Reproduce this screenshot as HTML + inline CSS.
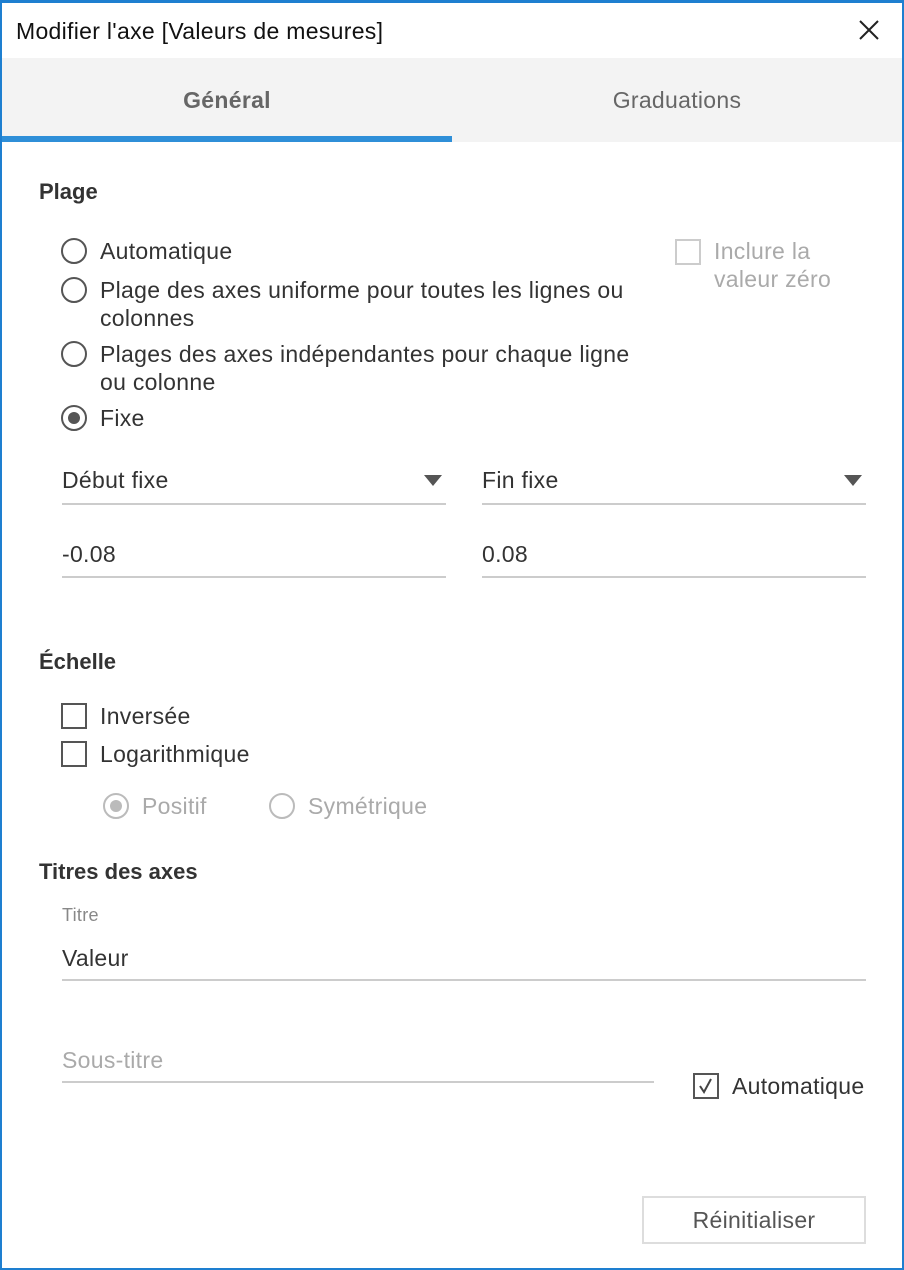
<!DOCTYPE html>
<html><head><meta charset="utf-8"><style>
*{margin:0;padding:0;box-sizing:border-box}
body{width:904px;height:1270px;background:#fff;font-family:"Liberation Sans",Arial,sans-serif;color:#333;position:relative;overflow:hidden}
.frame{position:absolute;left:0;top:0;width:904px;height:1270px;border:2px solid #1e7fd0;border-top-width:3px}
.t{position:absolute;white-space:nowrap;line-height:28px;font-size:23px;letter-spacing:0.3px}
.h{font-size:22px;font-weight:bold;letter-spacing:0}
.r{position:absolute;width:26px;height:26px;border:2px solid #555;border-radius:50%}
.r.d{border-color:#bbb}
.cb{position:absolute;width:26px;height:26px;border:2px solid #555}
.ln{position:absolute;height:2px;background:#ccc}
.tri{position:absolute;width:0;height:0;border-left:9px solid transparent;border-right:9px solid transparent;border-top:11px solid #555}
</style></head><body>
<div class="frame"></div>
<div class="t" style="left:16px;top:17px;color:#111">Modifier l'axe [Valeurs de mesures]</div>
<svg style="position:absolute;left:858px;top:19px" width="22" height="22"><path d="M2 2L20 20M20 2L2 20" stroke="#222" stroke-width="2"/></svg>
<div style="position:absolute;left:2px;top:58px;width:900px;height:84px;background:#f3f3f3"></div>
<div style="position:absolute;left:2px;top:136px;width:450px;height:6px;background:#2f8fd8"></div>
<div class="t" style="left:0;width:454px;text-align:center;top:86px;font-weight:bold;color:#666">Général</div>
<div class="t" style="left:452px;width:450px;text-align:center;top:86px;color:#666">Graduations</div>

<div class="t h" style="left:39px;top:178px">Plage</div>
<div class="r" style="left:61px;top:238px"></div><div class="t" style="left:100px;top:237px">Automatique</div>
<div class="r" style="left:61px;top:277px"></div><div class="t" style="left:100px;top:276px">Plage des axes uniforme pour toutes les lignes ou</div>
<div class="t" style="left:100px;top:304px">colonnes</div>
<div class="r" style="left:61px;top:341px"></div><div class="t" style="left:100px;top:340px">Plages des axes indépendantes pour chaque ligne</div>
<div class="t" style="left:100px;top:368px">ou colonne</div>
<div class="r" style="left:61px;top:405px"></div><div style="position:absolute;left:68px;top:412px;width:12px;height:12px;border-radius:50%;background:#555"></div>
<div class="t" style="left:100px;top:404px">Fixe</div>
<div class="cb" style="left:675px;top:239px;border-color:#ccc"></div>
<div class="t" style="left:714px;top:237px;color:#aaa">Inclure la</div>
<div class="t" style="left:714px;top:265px;color:#aaa">valeur zéro</div>

<div class="t" style="left:62px;top:466px">Début fixe</div><div class="tri" style="left:424px;top:475px"></div>
<div class="ln" style="left:62px;top:503px;width:384px"></div>
<div class="t" style="left:482px;top:466px">Fin fixe</div><div class="tri" style="left:844px;top:475px"></div>
<div class="ln" style="left:482px;top:503px;width:384px"></div>
<div class="t" style="left:62px;top:540px">-0.08</div>
<div class="ln" style="left:62px;top:576px;width:384px"></div>
<div class="t" style="left:482px;top:540px">0.08</div>
<div class="ln" style="left:482px;top:576px;width:384px"></div>

<div class="t h" style="left:39px;top:648px">Échelle</div>
<div class="cb" style="left:61px;top:703px"></div><div class="t" style="left:100px;top:702px">Inversée</div>
<div class="cb" style="left:61px;top:741px"></div><div class="t" style="left:100px;top:740px">Logarithmique</div>
<div class="r d" style="left:103px;top:793px"></div><div style="position:absolute;left:110px;top:800px;width:12px;height:12px;border-radius:50%;background:#bbb"></div>
<div class="t" style="left:142px;top:792px;color:#aaa">Positif</div>
<div class="r d" style="left:269px;top:793px"></div>
<div class="t" style="left:308px;top:792px;color:#aaa">Symétrique</div>

<div class="t h" style="left:39px;top:858px">Titres des axes</div>
<div class="t" style="left:62px;top:901px;font-size:18px;color:#888">Titre</div>
<div class="t" style="left:62px;top:944px">Valeur</div>
<div class="ln" style="left:62px;top:979px;width:804px"></div>
<div class="t" style="left:62px;top:1046px;color:#aaa">Sous-titre</div>
<div class="ln" style="left:62px;top:1081px;width:592px"></div>
<div class="cb" style="left:693px;top:1073px"></div>
<svg style="position:absolute;left:693px;top:1073px" width="26" height="26"><path d="M7 13L11 19L18 6" stroke="#444" stroke-width="2" fill="none"/></svg>
<div class="t" style="left:732px;top:1072px">Automatique</div>

<div class="t" style="left:642px;top:1196px;width:224px;height:48px;border:2px solid #ddd;text-align:center;line-height:44px;color:#555">Réinitialiser</div>
</body></html>
